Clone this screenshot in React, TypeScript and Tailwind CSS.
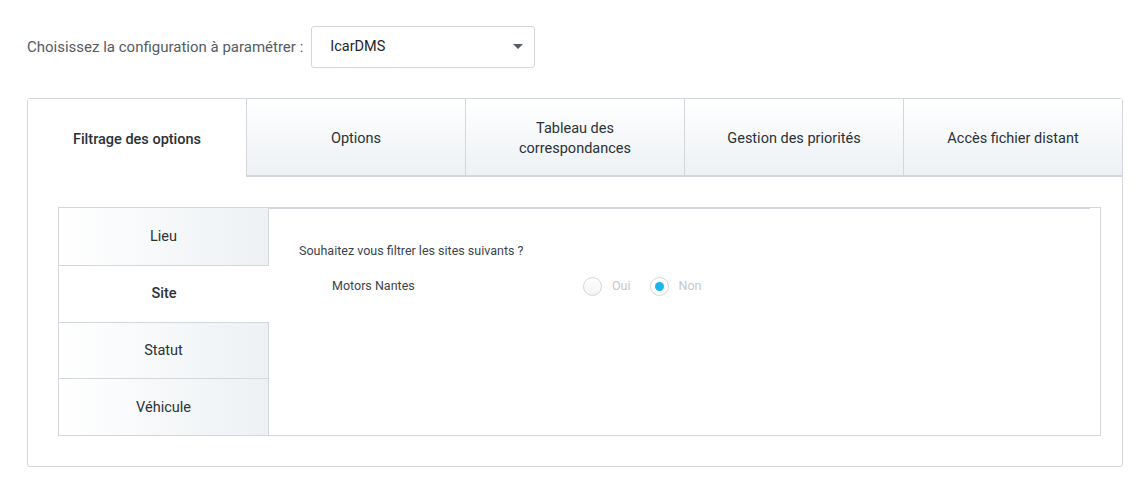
import React from "react";

const topTabs = ["Filtrage des options", "Options", "Tableau des correspondances", "Gestion des priorités", "Accès fichier distant"];
const sideTabs = ["Lieu", "Site", "Statut", "Véhicule"];

export default function App() {
  return (
    <div className="w-[1138px] h-[480px] bg-white text-[#2b3138]" style={{ fontFamily: "Roboto, 'Liberation Sans', sans-serif" }}>
      <div className="pt-[26px] pl-[27px] flex items-center">
        <span className="text-[15px] text-[#555b62] mr-[8px]">Choisissez la configuration à paramétrer :</span>
        <div className="w-[224px] h-[42px] border border-[#d3d7db] rounded-[3px] flex items-center justify-between pl-[18px] pr-[11px]">
          <span className="text-[14.5px] text-[#1f2429]">IcarDMS</span>
          <svg width="10" height="6" viewBox="0 0 10 6"><path d="M0 0 L10 0 L5 5 Z" fill="#555b62" /></svg>
        </div>
      </div>
      <div className="mt-[30px] ml-[27px] w-[1096px] h-[369px] border border-[#d3d7db] rounded-[3px] flex flex-col">
        <div className="flex h-[78px]">
          {topTabs.map((t, i) => (
            <div
              key={t}
              className={
                "flex-1 flex items-center justify-center text-center px-[40px] pt-[3px] text-[14.5px] leading-[20px] " +
                (i === 0
                  ? "bg-white font-medium"
                  : "bg-gradient-to-b from-white to-[#edf1f4] border-l border-[#d3d7db] border-b-2 border-b-[#d3d7db]")
              }
            >
              {t}
            </div>
          ))}
        </div>
        <div className="flex-1 pt-[30px] pl-[30px] pr-[21px] pb-[30px]">
          <div className="h-[229px] border border-[#d3d7db] flex">
            <div className="w-[210px] flex flex-col">
              {sideTabs.map((t, i) => (
                <div
                  key={t}
                  className={
                    "h-[57px] flex items-center justify-center text-[14.5px] pt-[1px] " +
                    (i > 0 ? "border-t border-[#d3d7db] " : "") +
                    (i === 1
                      ? "bg-white font-medium"
                      : "bg-gradient-to-r from-white to-[#edf1f4] border-r border-[#d3d7db]")
                  }
                >
                  {t}
                </div>
              ))}
            </div>
            <div className="flex-1 pr-[10px]">
              <div className="border-t-2 border-[#d3d7db] -mt-px pl-[30px] pt-[33px]">
                <div className="text-[12.5px] text-[#3d434a]">Souhaitez vous filtrer les sites suivants ?</div>
                <div className="flex items-center mt-[16px] h-[20px]">
                  <div className="w-[284px] pl-[33px] text-[12.5px] text-[#3d434a]">Motors Nantes</div>
                  <div className="flex items-center">
                    <span className="w-[19px] h-[19px] rounded-full border border-[#d3d7db] bg-gradient-to-b from-white to-[#f1f3f5]" />
                    <span className="ml-[10px] text-[12.5px] text-[#c3c8cd]">Oui</span>
                    <span className="ml-[19px] w-[19px] h-[19px] rounded-full border border-[#d3d7db] bg-white flex items-center justify-center">
                      <span className="w-[9px] h-[9px] rounded-full bg-[#19b5ec]" />
                    </span>
                    <span className="ml-[10px] text-[12.5px] text-[#c3c8cd]">Non</span>
                  </div>
                </div>
              </div>
            </div>
          </div>
        </div>
      </div>
    </div>
  );
}
